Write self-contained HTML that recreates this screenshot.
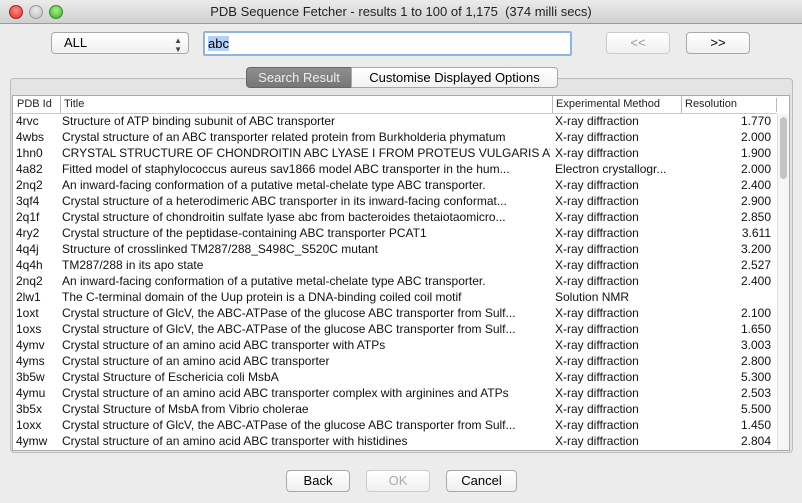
<!DOCTYPE html><html><head><style>
body{margin:0;width:802px;height:503px;overflow:hidden;font-family:"Liberation Sans",sans-serif;font-size:12px;background:#ececec;position:relative}
.a{position:absolute}
.title{left:0;top:0;width:802px;height:23px;background:linear-gradient(#ebebeb,#d0d0d0);border-bottom:1px solid #9a9a9a;text-align:center;line-height:24px;font-size:13px;color:#222}
.dot{width:12px;height:12px;border-radius:50%;top:5px}
.btn{background:linear-gradient(#fff,#f0f0f0);border:1px solid #a8a8a8;border-radius:4px;text-align:center;height:20px;line-height:20px;font-size:13px}
.row{position:absolute;left:0;width:764px;height:16px;line-height:16px;font-size:12px;color:#111;white-space:nowrap}
.row span{position:absolute}
</style></head><body>
<div class="a title">PDB Sequence Fetcher - results 1 to 100 of 1,175&nbsp; (374 milli secs)</div>
<div class="a dot" style="left:9px;background:radial-gradient(circle at 50% 35%,#ff8a80,#d8322a);border:1px solid #a22"></div>
<div class="a dot" style="left:29px;background:radial-gradient(circle at 50% 35%,#eee,#bbb);border:1px solid #999"></div>
<div class="a dot" style="left:49px;background:radial-gradient(circle at 50% 35%,#a6f08a,#3fae2a);border:1px solid #3a8a2a"></div>
<div class="a btn" style="left:51px;top:32px;width:136px;text-align:left;font-size:13px"><span style="margin-left:12px">ALL</span><span style="position:absolute;right:6px;top:-1px;font-size:8px;line-height:9px;color:#444;top:3px">▲<br>▼</span></div>
<div class="a" style="left:203px;top:31px;width:365px;height:21px;background:#fff;border:2px solid #8fb4e0;border-radius:2px"><span style="position:absolute;left:3px;top:3px;background:#b3d1f5;font-size:13px;line-height:15px">abc</span></div>
<div class="a btn" style="left:606px;top:32px;width:62px;color:#999;border-color:#ccc">&lt;&lt;</div>
<div class="a btn" style="left:686px;top:32px;width:62px">&gt;&gt;</div>
<div class="a" style="left:10px;top:78px;width:781px;height:373px;border:1px solid #bcbcbc;border-radius:4px;background:#e4e4e4"></div>
<div class="a" style="left:246px;top:67px;width:104px;height:19px;background:linear-gradient(#8e8e8e,#777);border:1px solid #666;border-radius:4px 0 0 4px;color:#eee;text-align:center;line-height:19px;font-size:13px">Search Result</div>
<div class="a" style="left:351px;top:67px;width:205px;height:19px;background:linear-gradient(#fff,#f2f2f2);border:1px solid #a8a8a8;border-radius:0 4px 4px 0;text-align:center;line-height:19px;font-size:13px">Customise Displayed Options</div>
<div class="a" style="left:12px;top:95px;width:776px;height:354px;background:#fff;border:1px solid #aaa;overflow:hidden">
<div class="row" style="top:0;height:17px;line-height:17px;font-size:11px;color:#222;border-bottom:1px solid #ccc;width:764px">
<span style="left:4px">PDB Id</span><span style="left:47px;border-left:1px solid #bbb;padding-left:3px">Title</span><span style="left:539px;border-left:1px solid #bbb;padding-left:3px">Experimental Method</span><span style="left:668px;border-left:1px solid #bbb;padding-left:3px">Resolution</span><span style="left:763px;border-left:1px solid #bbb;height:14px;top:2px"></span></div>
<div class="a" style="left:764px;top:18px;width:12px;height:336px;background:#f6f6f6;border-left:1px solid #e0e0e0"><div style="margin:3px 2px;width:7px;height:62px;border-radius:4px;background:#c4c4c4"></div></div>
<div id="rows"></div>
</div>
<div class="a btn" style="left:286px;top:470px;width:62px">Back</div>
<div class="a btn" style="left:366px;top:470px;width:62px;color:#aaa;border-color:#ccc">OK</div>
<div class="a btn" style="left:446px;top:470px;width:69px">Cancel</div>
<script>
var d=[["4rvc","Structure of ATP binding subunit of ABC transporter","X-ray diffraction","1.770"],
["4wbs","Crystal structure of an ABC transporter related protein from Burkholderia phymatum","X-ray diffraction","2.000"],
["1hn0","CRYSTAL STRUCTURE OF CHONDROITIN ABC LYASE I FROM PROTEUS VULGARIS AT...","X-ray diffraction","1.900"],
["4a82","Fitted model of staphylococcus aureus sav1866 model ABC transporter in the hum...","Electron crystallogr...","2.000"],
["2nq2","An inward-facing conformation of a putative metal-chelate type ABC transporter.","X-ray diffraction","2.400"],
["3qf4","Crystal structure of a heterodimeric ABC transporter in its inward-facing conformat...","X-ray diffraction","2.900"],
["2q1f","Crystal structure of chondroitin sulfate lyase abc from bacteroides thetaiotaomicro...","X-ray diffraction","2.850"],
["4ry2","Crystal structure of the peptidase-containing ABC transporter PCAT1","X-ray diffraction","3.611"],
["4q4j","Structure of crosslinked TM287/288_S498C_S520C mutant","X-ray diffraction","3.200"],
["4q4h","TM287/288 in its apo state","X-ray diffraction","2.527"],
["2nq2","An inward-facing conformation of a putative metal-chelate type ABC transporter.","X-ray diffraction","2.400"],
["2lw1","The C-terminal domain of the Uup protein is a DNA-binding coiled coil motif","Solution NMR",""],
["1oxt","Crystal structure of GlcV, the ABC-ATPase of the glucose ABC transporter from Sulf...","X-ray diffraction","2.100"],
["1oxs","Crystal structure of GlcV, the ABC-ATPase of the glucose ABC transporter from Sulf...","X-ray diffraction","1.650"],
["4ymv","Crystal structure of an amino acid ABC transporter with ATPs","X-ray diffraction","3.003"],
["4yms","Crystal structure of an amino acid ABC transporter","X-ray diffraction","2.800"],
["3b5w","Crystal Structure of Eschericia coli MsbA","X-ray diffraction","5.300"],
["4ymu","Crystal structure of an amino acid ABC transporter complex with arginines and ATPs","X-ray diffraction","2.503"],
["3b5x","Crystal Structure of MsbA from Vibrio cholerae","X-ray diffraction","5.500"],
["1oxx","Crystal structure of GlcV, the ABC-ATPase of the glucose ABC transporter from Sulf...","X-ray diffraction","1.450"],
["4ymw","Crystal structure of an amino acid ABC transporter with histidines","X-ray diffraction","2.804"]];
var h="";d.forEach(function(r,i){h+='<div class="row" style="top:'+(17+i*16)+'px"><span style="left:3px">'+r[0]+'</span><span style="left:49px;width:488px;overflow:hidden">'+r[1]+'</span><span style="left:542px">'+r[2]+'</span><span style="right:6px">'+r[3]+'</span></div>'});
document.getElementById("rows").innerHTML=h;
</script>
</body></html>
